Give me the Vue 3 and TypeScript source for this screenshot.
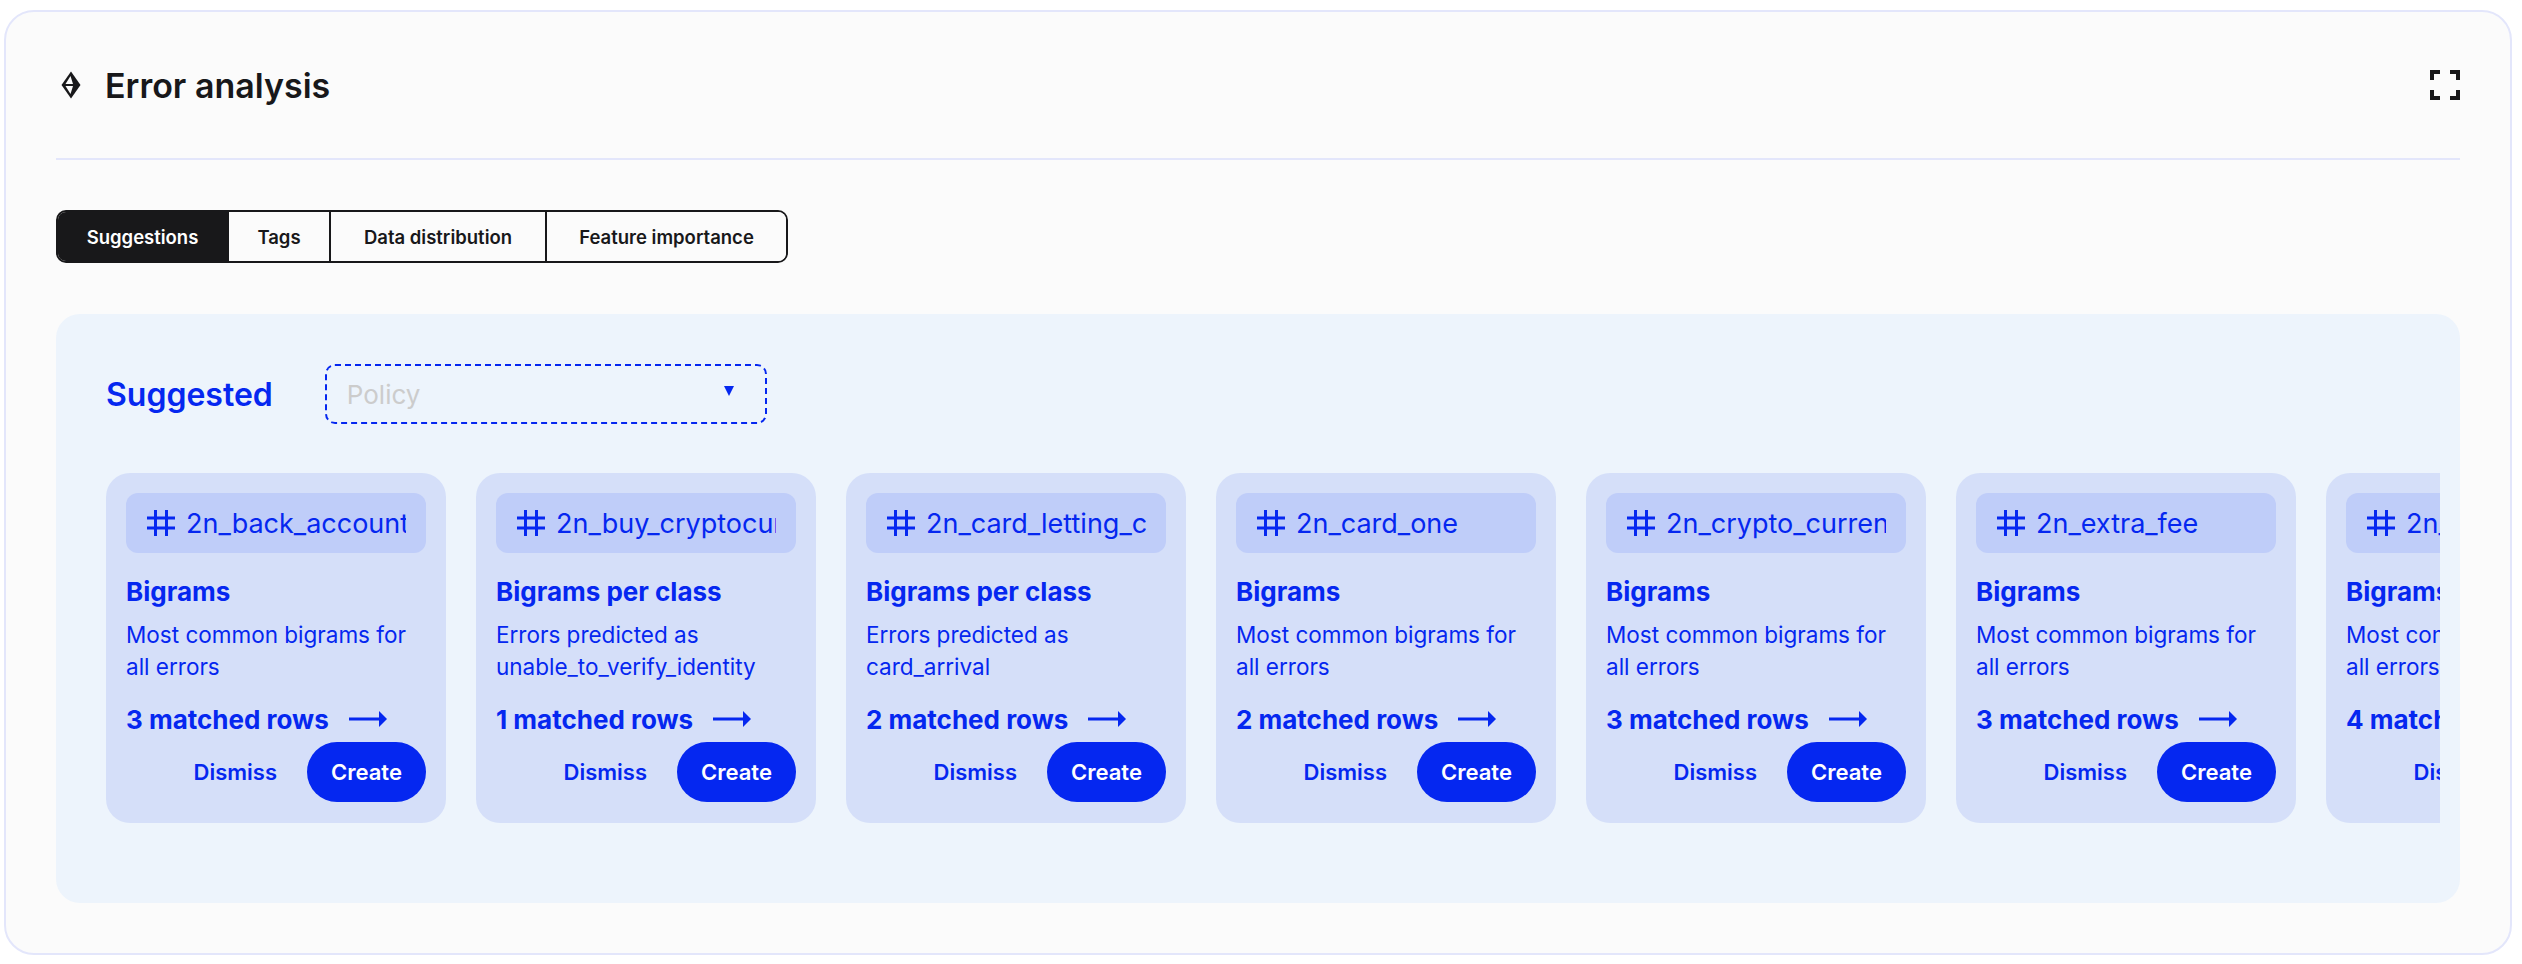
<template>
  <div class="page">
    <section class="panel">
      <header class="panel-header">
        <div class="heading">
          <svg class="gem" width="20" height="28" viewBox="0 0 20 28" fill="none">
            <path d="M10 0.5 L19.5 14 L10 27.5 L0.5 14 Z" fill="#18181a" />
            <path d="M9.5 5 L4.5 13 H12 Z M9.5 23 L4.5 15 H12 Z" fill="#fbfbfb" />
          </svg>
          <h1>Error analysis</h1>
        </div>
        <svg class="expand" width="30" height="30" viewBox="0 0 30 30" fill="none" stroke="#18181a" stroke-width="4">
          <path d="M2 10 V2 H10 M20 2 H28 V10 M28 20 V28 H20 M10 28 H2 V20" />
        </svg>
      </header>

      <div class="tabs">
        <button
          v-for="tab in tabs"
          :key="tab"
          :class="['tab', { active: activeTab === tab }]"
          @click="activeTab = tab"
        >
          {{ tab }}
        </button>
      </div>

      <div class="suggested">
        <div class="suggested-top">
          <h2>Suggested</h2>
          <div class="policy">
            <span>Policy</span>
            <i class="caret"></i>
          </div>
        </div>
        <div class="cards">
          <article v-for="card in cards" :key="card.tag" class="card">
            <div class="chip">
              <svg class="hash" width="28" height="28" viewBox="0 0 28 28" fill="none" stroke="#0527f0" stroke-width="3">
                <path d="M8.5 1 V27 M19.5 1 V27 M0 9 H28 M0 19 H28" />
              </svg>
              <span>{{ card.tag }}</span>
            </div>
            <h3>{{ card.title }}</h3>
            <p>{{ card.desc }}<br />{{ card.desc2 }}</p>
            <div class="matched">
              <span>{{ card.rows }} matched rows</span>
              <svg width="38" height="16" viewBox="0 0 38 16" fill="#0527f0">
                <path d="M0 6.5 H30 V0 L38 8 L30 16 V9.5 H0 Z" />
              </svg>
            </div>
            <div class="actions">
              <button class="dismiss">Dismiss</button>
              <button class="create">Create</button>
            </div>
          </article>
        </div>
      </div>
    </section>
  </div>
</template>

<script setup lang="ts">
import { ref } from 'vue'

interface Card {
  tag: string
  title: string
  desc: string
  desc2: string
  rows: number
}

const tabs = ['Suggestions', 'Tags', 'Data distribution', 'Feature importance']
const activeTab = ref('Suggestions')

const common = { title: 'Bigrams', desc: 'Most common bigrams for', desc2: 'all errors' }

const cards: Card[] = [
  { ...common, tag: '2n_back_account', rows: 3 },
  { tag: '2n_buy_cryptocurrency', title: 'Bigrams per class', desc: 'Errors predicted as', desc2: 'unable_to_verify_identity', rows: 1 },
  { tag: '2n_card_letting_company', title: 'Bigrams per class', desc: 'Errors predicted as', desc2: 'card_arrival', rows: 2 },
  { ...common, tag: '2n_card_one', rows: 2 },
  { ...common, tag: '2n_crypto_currency', rows: 3 },
  { ...common, tag: '2n_extra_fee', rows: 3 },
  { ...common, tag: '2n_fiat_currency', rows: 4 }
]
</script>

<style>
html,
body {
  margin: 0;
  background: #fff;
}
</style>

<style scoped>
.page {
  padding: 10px 10px 9px 4px;
  font-family: Inter, "Liberation Sans", sans-serif;
  color: #18181a;
}

.panel {
  box-sizing: border-box;
  height: 945px;
  border: 2px solid #e3e6fb;
  border-radius: 30px;
  background: #fbfbfb;
  padding: 0 50px 50px;
}

.panel-header {
  display: flex;
  align-items: center;
  justify-content: space-between;
  height: 148px;
  border-bottom: 2px solid #e3e6fb;
  box-sizing: border-box;
}

.heading {
  display: flex;
  align-items: center;
  gap: 24px;
}

.gem {
  margin-left: 5px;
}

h1 {
  margin: 0;
  font-size: 34px;
  font-weight: 600;
}

.tabs {
  display: inline-grid;
  grid-template-columns: 169px 102px 216px 241px;
  margin-top: 50px;
  height: 53px;
  box-sizing: border-box;
  border: 2px solid #18181a;
  border-radius: 10px;
  overflow: hidden;
  vertical-align: top;
}

.tab {
  padding: 0;
  border: 0;
  border-left: 2px solid #18181a;
  background: #fbfbfb;
  color: #18181a;
  font: 600 18.5px Inter, "Liberation Sans", sans-serif;
}

.tab:first-child {
  border-left: 0;
}

.tab.active {
  background: #18181a;
  color: #fff;
}

.suggested {
  margin-top: 51px;
  height: 589px;
  box-sizing: border-box;
  border-radius: 24px;
  background: #edf4fc;
  padding: 50px 20px 0 50px;
  color: #0527f0;
}

.suggested-top {
  display: flex;
  align-items: center;
  gap: 52px;
}

h2 {
  margin: 0;
  font-size: 32px;
  font-weight: 600;
}

.policy {
  box-sizing: border-box;
  width: 442px;
  height: 60px;
  display: flex;
  align-items: center;
  justify-content: space-between;
  border: 2px dashed #0527f0;
  border-radius: 10px;
  padding: 0 31px 0 20px;
  font-size: 26px;
  color: #ccc;
}

.caret {
  width: 0;
  height: 0;
  border-left: 5px solid transparent;
  border-right: 5px solid transparent;
  border-top: 10px solid #0527f0;
  margin-bottom: 6px;
}

.cards {
  display: flex;
  gap: 30px;
  margin-top: 49px;
  overflow: hidden;
}

.card {
  flex: 0 0 340px;
  min-width: 0;
  box-sizing: border-box;
  height: 350px;
  border-radius: 24px;
  background: #d5dff9;
  padding: 20px;
}

.chip {
  display: flex;
  align-items: center;
  gap: 11px;
  height: 60px;
  box-sizing: border-box;
  padding: 0 20px 0 21px;
  border-radius: 12px;
  background: #bfcdf9;
  font-size: 27px;
  white-space: nowrap;
}

.chip span {
  min-width: 0;
  overflow: hidden;
}

.hash {
  flex: none;
}

h3 {
  margin: 22px 0 0;
  font-size: 26px;
  line-height: 34px;
  font-weight: 700;
}

p {
  margin: 10px 0 0;
  font-size: 22.5px;
  line-height: 32px;
}

.matched {
  display: flex;
  align-items: center;
  gap: 20px;
  margin-top: 18px;
  height: 36px;
  font-size: 26px;
  font-weight: 700;
}

.actions {
  display: flex;
  justify-content: flex-end;
  align-items: center;
  gap: 30px;
  margin-top: 5px;
}

.actions button {
  border: 0;
  background: none;
  color: #0527f0;
  font: 600 22px Inter, "Liberation Sans", sans-serif;
  padding: 0;
}

.actions .create {
  width: 119px;
  height: 60px;
  border-radius: 30px;
  background: #0527f0;
  color: #fff;
}
</style>
